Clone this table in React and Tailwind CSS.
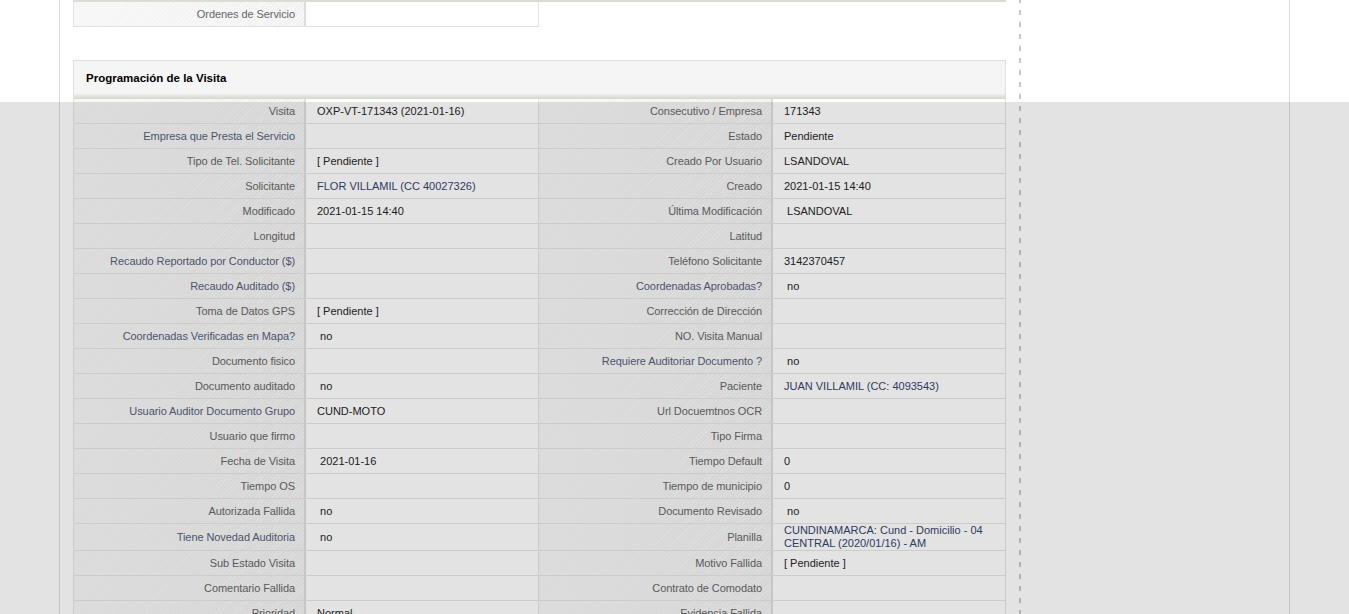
import React from "react";

const rows = [
  [["Visita"], ["OXP-VT-171343 (2021-01-16)"], ["Consecutivo / Empresa"], ["171343"]],
  [["Empresa que Presta el Servicio", 1], [""], ["Estado"], ["Pendiente"]],
  [["Tipo de Tel. Solicitante"], ["[ Pendiente ]"], ["Creado Por Usuario"], ["LSANDOVAL"]],
  [["Solicitante"], ["FLOR VILLAMIL (CC 40027326)", 1], ["Creado"], ["2021-01-15 14:40"]],
  [["Modificado"], ["2021-01-15 14:40"], ["Última Modificación"], ["\u00a0LSANDOVAL"]],
  [["Longitud"], [""], ["Latitud"], [""]],
  [["Recaudo Reportado por Conductor ($)", 1], [""], ["Teléfono Solicitante"], ["3142370457"]],
  [["Recaudo Auditado ($)", 1], [""], ["Coordenadas Aprobadas?", 1], ["\u00a0no"]],
  [["Toma de Datos GPS"], ["[ Pendiente ]"], ["Corrección de Dirección"], [""]],
  [["Coordenadas Verificadas en Mapa?", 1], ["\u00a0no"], ["NO. Visita Manual"], [""]],
  [["Documento fisico"], [""], ["Requiere Auditoriar Documento ?", 1], ["\u00a0no"]],
  [["Documento auditado"], ["\u00a0no"], ["Paciente"], ["JUAN VILLAMIL (CC: 4093543)", 1]],
  [["Usuario Auditor Documento Grupo", 1], ["CUND-MOTO"], ["Url Docuemtnos OCR"], [""]],
  [["Usuario que firmo"], [""], ["Tipo Firma"], [""]],
  [["Fecha de Visita"], ["\u00a02021-01-16"], ["Tiempo Default"], ["0"]],
  [["Tiempo OS"], [""], ["Tiempo de municipio"], ["0"]],
  [["Autorizada Fallida"], ["\u00a0no"], ["Documento Revisado"], ["\u00a0no"]],
  [["Tiene Novedad Auditoria", 1], ["\u00a0no"], ["Planilla"], ["PLANILLA", 1]],
  [["Sub Estado Visita"], [""], ["Motivo Fallida"], ["[ Pendiente ]"]],
  [["Comentario Fallida"], [""], ["Contrato de Comodato"], [""]],
  [["Prioridad"], ["Normal"], ["Evidencia Fallida"], [""]],
];

const labelBg =
  "bg-[#f1f1f1] bg-[linear-gradient(to_right,rgba(249,249,249,0.7),rgba(249,249,249,0)),repeating-linear-gradient(135deg,rgba(255,255,255,0.55)_0px,rgba(255,255,255,0.55)_1px,transparent_1px,transparent_3px)]";

function Label({ text, blue, first }) {
  return (
    <div
      className={`${first ? "w-[233px] border-l border-l-[#e4e4e4]" : "w-[234px]"} shrink-0 min-h-[24px] flex items-center justify-end pr-[9px] border-r-2 border-r-[#dedede] ${labelBg} ${blue ? "text-[#56607a]" : "text-[#666666]"}`}
    >
      <span className="tracking-[-0.08px]">{text}</span>
    </div>
  );
}

function Value({ text, blue }) {
  return (
    <div
      className={`w-[233px] shrink-0 min-h-[24px] flex items-center pl-[11px] pr-[6px] border-r border-r-[#e4e4e4] bg-white ${blue ? "text-[#35446e]" : "text-[#262626]"}`}
    >
      {text === "PLANILLA" ? (
        <span>
          CUNDINAMARCA: Cund - Domicilio - 04
          <br />
          CENTRAL (2020/01/16) - AM
        </span>
      ) : (
        text
      )}
    </div>
  );
}

export default function App() {
  return (
    <div className="relative h-[614px] w-full overflow-hidden bg-white font-['Liberation_Sans',Arial,sans-serif] text-[11px] leading-[13px]">
      <div className="flex h-full">
        <div className="w-[59px] shrink-0" />
        <div className="w-[1231px] shrink-0 border-x border-[#dcdcdc] flex">
          <div className="pl-[13px] w-[959px] shrink-0">
            <div className="w-[933px]">
              <div className="h-[2px] bg-[#dcdcd6]" />
              <div className="flex w-[466px] border-b border-b-[#e0e0e0]">
                <Label text="Ordenes de Servicio" first />
                <Value text="" />
              </div>

              <div className="mt-[33px] border border-[#e0e0e0] border-b-0 bg-[#f5f5f5]">
                <div className="h-[33px] flex items-center pl-[12px] pt-[2px] font-bold text-[11.5px] text-black">
                  Programación de la Visita
                </div>
                <div className="h-[5px] bg-gradient-to-b from-[#f1f1ed] to-[#d5d5cd]" />
              </div>

              <div>
                {rows.map((r, i) => (
                  <div key={i} className="flex border-b border-b-[#e6e6e6]">
                    <Label text={r[0][0]} blue={r[0][1]} first />
                    <Value text={r[1][0]} blue={r[1][1]} />
                    <Label text={r[2][0]} blue={r[2][1]} />
                    <Value text={r[3][0]} blue={r[3][1]} />
                  </div>
                ))}
              </div>
            </div>
          </div>
          <div className="w-[2px] shrink-0 self-stretch bg-[repeating-linear-gradient(to_bottom,#c8c8c8_0px,#c8c8c8_3px,transparent_3px,transparent_10px,#c8c8c8_10px,#c8c8c8_12px)]" />
          <div className="flex-1" />
        </div>
        <div className="flex-1" />
      </div>
      <div className="absolute left-0 right-0 top-[102px] bottom-0 bg-[rgba(0,0,0,0.11)]" />
    </div>
  );
}
